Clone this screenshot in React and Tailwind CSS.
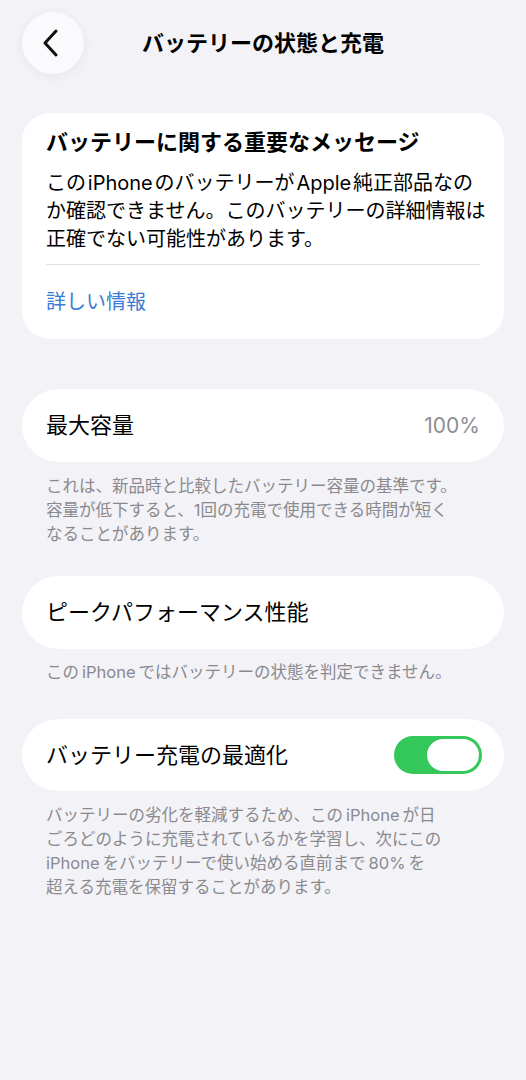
import React, { useState } from 'react';

const font = { fontFamily: 'Inter, "Noto Sans CJK JP", "Noto Sans", sans-serif' };

function Toggle({ on, onChange }) {
    return (
        <button
            onClick={() => onChange(!on)}
            className={`w-[88px] h-[38px] rounded-full p-[3px] flex ${on ? 'justify-end bg-[#34c759]' : 'justify-start bg-[#e5e5ea]'}`}
        >
            <span className="w-[52px] h-[32px] rounded-full bg-white block" />
        </button>
    );
}

export default function App() {
    const [optimize, setOptimize] = useState(true);

    return (
        <div className="min-h-screen w-[526px] bg-[#f2f2f7] text-black" style={font}>
            {/* Header */}
            <div className="grid grid-cols-[62px_1fr_62px] items-center px-[22px] pt-[12px]">
                <button className="w-[62px] h-[62px] rounded-full bg-[#fafafc] shadow-[0_2px_12px_rgba(0,0,0,0.06)] flex items-center justify-center">
                    <svg width="20" height="28" viewBox="0 0 20 28" className="-ml-[4px]">
                        <polyline points="15,2 4,14 15,26" fill="none" stroke="#111" strokeWidth="3" strokeLinecap="round" strokeLinejoin="round" />
                    </svg>
                </button>
                <h1 className="text-center text-[22px] font-bold leading-[30px]">バッテリーの状態と充電</h1>
                <div />
            </div>

            <main className="px-[22px] mt-[39px]">
                {/* Important message */}
                <div className="bg-white rounded-[28px] px-[24px] pt-[14px] pb-[23px]">
                    <h2 className="text-[22px] font-bold leading-[30px] whitespace-nowrap">バッテリーに関する重要なメッセージ</h2>
                    <p className="mt-[12px] text-[20px] leading-[28px] whitespace-nowrap">
                        この{'\u200a'}iPhone{'\u200a'}のバッテリーが{'\u200a'}Apple{'\u200a'}純正部品なの<br />
                        か確認できません。このバッテリーの詳細情報は<br />
                        正確でない可能性があります。
                    </p>
                    <div className="mt-[11px] h-px bg-[#e3e3e6]" />
                    <a className="block mt-[23px] text-[20px] leading-[28px] text-[#3a7bd5]">詳しい情報</a>
                </div>

                {/* Max capacity */}
                <div className="mt-[50px] bg-white rounded-full h-[73px] px-[24px] flex items-center justify-between">
                    <span className="text-[22px]">最大容量</span>
                    <span className="text-[21px] text-[#8e8e93]">100%</span>
                </div>
                <p className="mt-[12px] px-[24px] text-[16.5px] leading-[24px] text-[#8a8a8e] whitespace-nowrap">
                    これは、新品時と比較したバッテリー容量の基準です。<br />
                    容量が低下すると、1回の充電で使用できる時間が短く<br />
                    なることがあります。
                </p>

                {/* Peak performance */}
                <div className="mt-[30px] bg-white rounded-full h-[73px] px-[24px] flex items-center">
                    <span className="text-[22px]">ピークパフォーマンス性能</span>
                </div>
                <p className="mt-[11px] px-[24px] text-[16.5px] leading-[24px] text-[#8a8a8e] whitespace-nowrap">
                    この{'\u2009'}iPhone{'\u2009'}ではバッテリーの状態を判定できません。
                </p>

                {/* Optimized charging */}
                <div className="mt-[35px] bg-white rounded-full h-[72px] pl-[24px] pr-[22px] flex items-center justify-between">
                    <span className="text-[22px]">バッテリー充電の最適化</span>
                    <Toggle on={optimize} onChange={setOptimize} />
                </div>
                <p className="mt-[12px] px-[24px] text-[16.5px] leading-[24px] text-[#8a8a8e] whitespace-nowrap">
                    バッテリーの劣化を軽減するため、この{'\u2009'}iPhone{'\u2009'}が日<br />
                    ごろどのように充電されているかを学習し、次にこの<br />
                    iPhone{'\u2009'}をバッテリーで使い始める直前まで{'\u2009'}80%{'\u2009'}を<br />
                    超える充電を保留することがあります。
                </p>
            </main>
        </div>
    );
}
